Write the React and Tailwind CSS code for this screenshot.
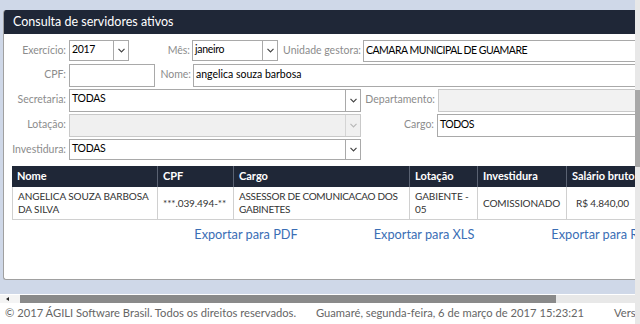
import React from 'react'

const font = { fontFamily: 'Lato, "Open Sans", sans-serif' }

function Chevron({ disabled }) {
  return (
    <div className={`w-[15px] h-full flex items-center justify-center border-l ${disabled ? 'border-[#d4d4d4]' : 'border-[#a9a9a9]'}`}>
      <svg width="7" height="5" viewBox="0 0 7 5">
        <path d="M0.5 0.8 L3.5 3.8 L6.5 0.8" fill="none" stroke={disabled ? '#b8b8b8' : '#444'} strokeWidth="1.2" />
      </svg>
    </div>
  )
}

function Select({ value, width, disabled }) {
  return (
    <div className={`flex border h-full ${width} ${disabled ? 'bg-[#f0f0f0] border-[#c9c9c9]' : 'bg-white border-[#a9a9a9]'}`}>
      <div className="flex-1 px-[2px] pt-[2px] text-[10.5px] leading-[13px] tracking-[-0.3px] text-black truncate">{value}</div>
      <Chevron disabled={disabled} />
    </div>
  )
}

function Input({ value, width, disabled, upper }) {
  return (
    <div className={`border h-full shrink-0 px-[2px] pt-[3px] text-[10.5px] leading-[13px] text-black ${upper ? 'tracking-[-0.5px]' : ''} ${width} ${disabled ? 'bg-[#f2f2f2] border-[#c9c9c9]' : 'bg-white border-[#a9a9a9]'}`}>
      {value}
    </div>
  )
}

function Label({ children, width }) {
  return (
    <div className={`shrink-0 text-right pt-[4px] text-[10.5px] leading-[13px] text-[#8c8c8c] whitespace-nowrap ${width}`}>{children}</div>
  )
}

const cols = [
  { name: 'Nome', w: 'w-[145px]' },
  { name: 'CPF', w: 'w-[76px]' },
  { name: 'Cargo', w: 'w-[176px]' },
  { name: 'Lotação', w: 'w-[68px]' },
  { name: 'Investidura', w: 'w-[89px]' },
  { name: 'Salário bruto', w: 'w-[68px]' },
]

export default function App() {
  return (
    <div style={font} className="w-[640px] h-[324px] overflow-hidden bg-white flex">
      <div className="w-[635px] shrink-0 flex flex-col overflow-hidden">
        <div className="h-[294px] shrink-0 bg-[#cfd8e8] pt-[10px] pb-[14px] overflow-hidden">
          <div className="ml-[3px] w-[700px] h-full bg-white border-l border-b border-[#a0a0a0] rounded-tl-[3px] rounded-bl-[3px] overflow-hidden">
            <div className="h-[24px] w-[631px] bg-[#1f2737] pl-[9px] flex items-center text-[12.5px] text-white">
              Consulta de servidores ativos
            </div>

            <div className="flex flex-col gap-[2px] pt-[6px]">
              <div className="flex h-[22px]">
                <Label width="w-[62px]">Exercício:</Label>
                <div className="ml-[3px] h-[21px]"><Select value="2017" width="w-[60px]" /></div>
                <Label width="w-[61px]">Mês:</Label>
                <div className="ml-[2px] h-[21px]"><Select value="janeiro" width="w-[86px]" /></div>
                <Label width="w-[83px]">Unidade gestora:</Label>
                <div className="ml-[2px]"><Input value="CAMARA MUNICIPAL DE GUAMARE" width="w-[300px]" upper /></div>
              </div>
              <div className="flex h-[23px]">
                <Label width="w-[62px]">CPF:</Label>
                <div className="ml-[3px]"><Input value="" width="w-[86px]" /></div>
                <Label width="w-[36px]">Nome:</Label>
                <div className="ml-[2px]"><Input value="angelica souza barbosa" width="w-[460px]" /></div>
              </div>
              <div className="flex h-[23px]">
                <Label width="w-[62px]">Secretaria:</Label>
                <div className="ml-[3px] h-[23px]"><Select value="TODAS" width="w-[292px]" /></div>
                <Label width="w-[74px]">Departamento:</Label>
                <div className="ml-[3px]"><Input value="" width="w-[220px]" disabled /></div>
              </div>
              <div className="flex h-[23px]">
                <Label width="w-[62px]">Lotação:</Label>
                <div className="ml-[3px] h-[23px]"><Select value="" width="w-[292px]" disabled /></div>
                <Label width="w-[73px]">Cargo:</Label>
                <div className="ml-[3px]"><Input value="TODOS" width="w-[220px]" upper /></div>
              </div>
              <div className="flex h-[21px]">
                <Label width="w-[62px]">Investidura:</Label>
                <div className="ml-[3px] h-[21px]"><Select value="TODAS" width="w-[292px]" /></div>
              </div>
            </div>

            <div className="ml-[8px] mt-[6px]">
              <div className="flex h-[21px] bg-[#1f2737]">
                {cols.map((c, i) => (
                  <div key={c.name} className={`${c.w} shrink-0 px-[5px] flex items-center text-[11px] font-bold text-white whitespace-nowrap ${i > 0 ? 'border-l border-[#5a6272]' : ''}`}>
                    {c.name}
                  </div>
                ))}
              </div>
              <div className="flex h-[33px] text-[10px] leading-[13px] tracking-[-0.1px] text-[#333] border-b border-[#d0d0d0]">
                <div className="w-[145px] shrink-0 pl-[5px] pr-[3px] flex items-center border-l border-[#d0d0d0]">ANGELICA SOUZA BARBOSA DA SILVA</div>
                <div className="w-[76px] shrink-0 px-[5px] flex items-center border-l border-[#d0d0d0]">***.039.494-**</div>
                <div className="w-[176px] shrink-0 pl-[5px] pr-[1px] flex items-center border-l border-[#d0d0d0] tracking-[-0.3px]">ASSESSOR DE COMUNICACAO DOS GABINETES</div>
                <div className="w-[68px] shrink-0 px-[5px] flex items-center border-l border-[#d0d0d0]">GABIENTE - 05</div>
                <div className="w-[89px] shrink-0 px-[5px] flex items-center border-l border-[#d0d0d0]">COMISSIONADO</div>
                <div className="w-[68px] shrink-0 px-[5px] flex items-center justify-end border-l border-[#d0d0d0] whitespace-nowrap">R$ 4.840,00</div>
              </div>
            </div>

            <div className="flex ml-[153px] mt-[5px] text-[12.75px] text-[#3a6eb5] whitespace-nowrap">
              <div className="w-[178px] shrink-0 text-center">Exportar para PDF</div>
              <div className="w-[178px] shrink-0 text-center">Exportar para XLS</div>
              <div className="w-[178px] shrink-0 text-center">Exportar para RTF</div>
            </div>
          </div>
        </div>

        <div className="flex h-[8px] mt-[1px] shrink-0 bg-[#e8e8e8]">
          <div className="w-[20px] bg-[#f4f4f4] flex items-center pl-[6px]">
            <svg width="3" height="4" viewBox="0 0 3 4"><path d="M3 0 L0 2 L3 4 Z" fill="#222" /></svg>
          </div>
          <div className="w-[536px] bg-[#8a8a8a]" />
        </div>

        <div className="flex h-[21px] items-center text-[11.2px] text-[#666] whitespace-nowrap">
          <div className="pl-[5px] w-[316px] shrink-0">© 2017 ÁGILI Software Brasil. Todos os direitos reservados.</div>
          <div className="w-[298px] shrink-0">Guamaré, segunda-feira, 6 de março de 2017 15:23:21</div>
          <div className="shrink-0">Versão</div>
        </div>
      </div>

      <div className="w-[5px] shrink-0 bg-[#e8e8e8] flex flex-col">
        <div className="mt-[90px] h-[77px] bg-[#a8a8a8]" />
      </div>
    </div>
  )
}
